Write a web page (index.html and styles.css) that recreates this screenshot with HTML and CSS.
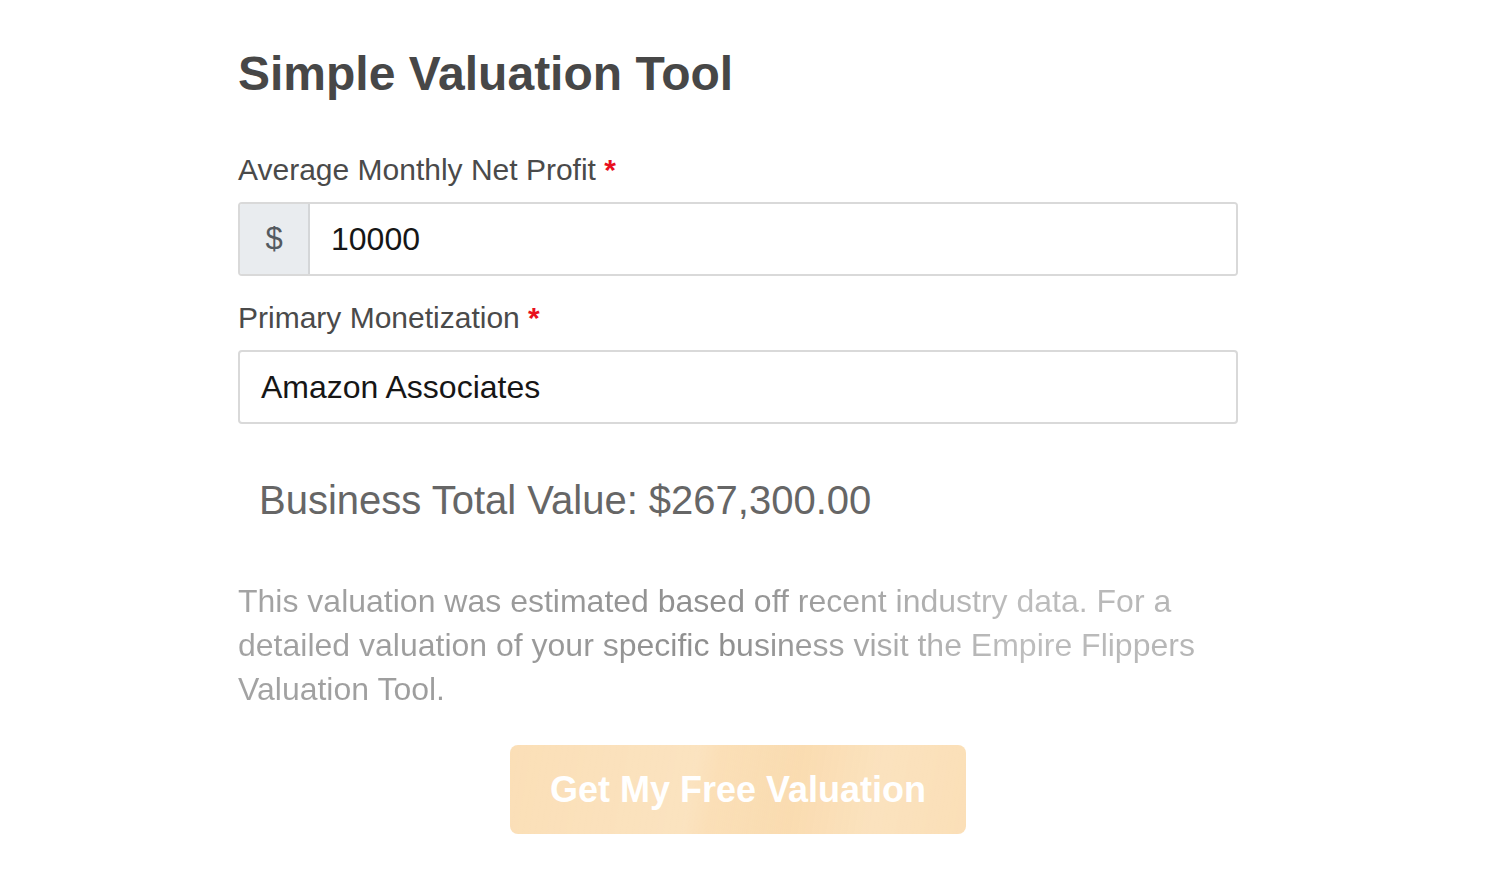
FILE: index.html
```html
<!DOCTYPE html>
<html lang="en">
<head>
<meta charset="utf-8">
<title>Simple Valuation Tool</title>
<link rel="stylesheet" href="styles.css">
</head>
<body>
<main class="tool">
  <h1 class="title">Simple Valuation Tool</h1>
  <form class="form">
    <label class="label">Average Monthly Net Profit <span class="req">*</span></label>
    <div class="input-group">
      <span class="prefix">$</span>
      <div class="field field-grouped">10000</div>
    </div>
    <label class="label">Primary Monetization <span class="req">*</span></label>
    <div class="field">Amazon Associates</div>
  </form>
  <div class="total">Business Total Value: $267,300.00</div>
  <p class="note">This valuation was estimated based off recent industry data. For a detailed valuation of your specific business visit the Empire Flippers Valuation Tool.</p>
  <div class="actions">
    <button class="cta" type="button">Get My Free Valuation</button>
  </div>
</main>
</body>
</html>
```
FILE: styles.css
```css
html, body {
  margin: 0;
  padding: 0;
  background: #ffffff;
}
body {
  font-family: "Liberation Sans", Arial, Helvetica, sans-serif;
  color: #4a4a4a;
}
.tool {
  width: 1000px;
  margin-left: 238px;
  padding-top: 45px;
}
.title {
  margin: 0;
  font-size: 48px;
  line-height: 58px;
  font-weight: 700;
  color: #474747;
}
.form {
  display: flex;
  flex-direction: column;
  margin-top: 49px;
}
.label {
  display: block;
  font-size: 30px;
  line-height: 36px;
  color: #4a4a4a;
  margin-bottom: 14px;
}
.req {
  color: #e8101e;
  font-weight: 700;
}
.input-group {
  display: flex;
  height: 74px;
  box-sizing: border-box;
  border: 2px solid #d9d9d9;
  border-radius: 4px;
  overflow: hidden;
  margin-bottom: 24px;
}
.prefix {
  width: 68px;
  flex: 0 0 68px;
  background: #e9ecef;
  border-right: 2px solid #d4d6d8;
  display: flex;
  align-items: center;
  justify-content: center;
  font-size: 31px;
  color: #555a5f;
}
.field {
  height: 74px;
  box-sizing: border-box;
  border: 2px solid #d9d9d9;
  border-radius: 4px;
  padding: 0 21px;
  display: flex;
  align-items: center;
  font-size: 32px;
  color: #161616;
  background: #fff;
}
.field-grouped {
  flex: 1;
  height: auto;
  border: none;
  border-radius: 0;
}
.total {
  margin-top: 52px;
  padding-left: 21px;
  font-size: 40px;
  line-height: 48px;
  color: #666666;
}
.note {
  margin: 55px 0 0;
  font-size: 32px;
  line-height: 44px;
  color: #a8a8a8;
  background: linear-gradient(90deg, #a3a3a3 0%, #9a9a9a 30%, #8e8e8e 48%, #a6a6a6 62%, #bdbdbd 78%, #b4b4b4 100%);
  -webkit-background-clip: text;
  background-clip: text;
  -webkit-text-fill-color: transparent;
}
.actions {
  display: flex;
  justify-content: center;
  margin-top: 34px;
}
.cta {
  font-family: "Liberation Sans", Arial, Helvetica, sans-serif;
  font-size: 36px;
  line-height: 41px;
  font-weight: 700;
  color: #ffffff;
  padding: 24px 40px;
  border: none;
  border-radius: 8px;
  background:
    linear-gradient(100deg, rgba(255,255,255,0) 0%, rgba(255,255,255,0.12) 40%, rgba(255,255,255,0) 45%, rgba(240,200,140,0.15) 62%, rgba(255,255,255,0.1) 80%, rgba(255,255,255,0) 100%),
    #fbdfb7;
  cursor: pointer;
}
```
